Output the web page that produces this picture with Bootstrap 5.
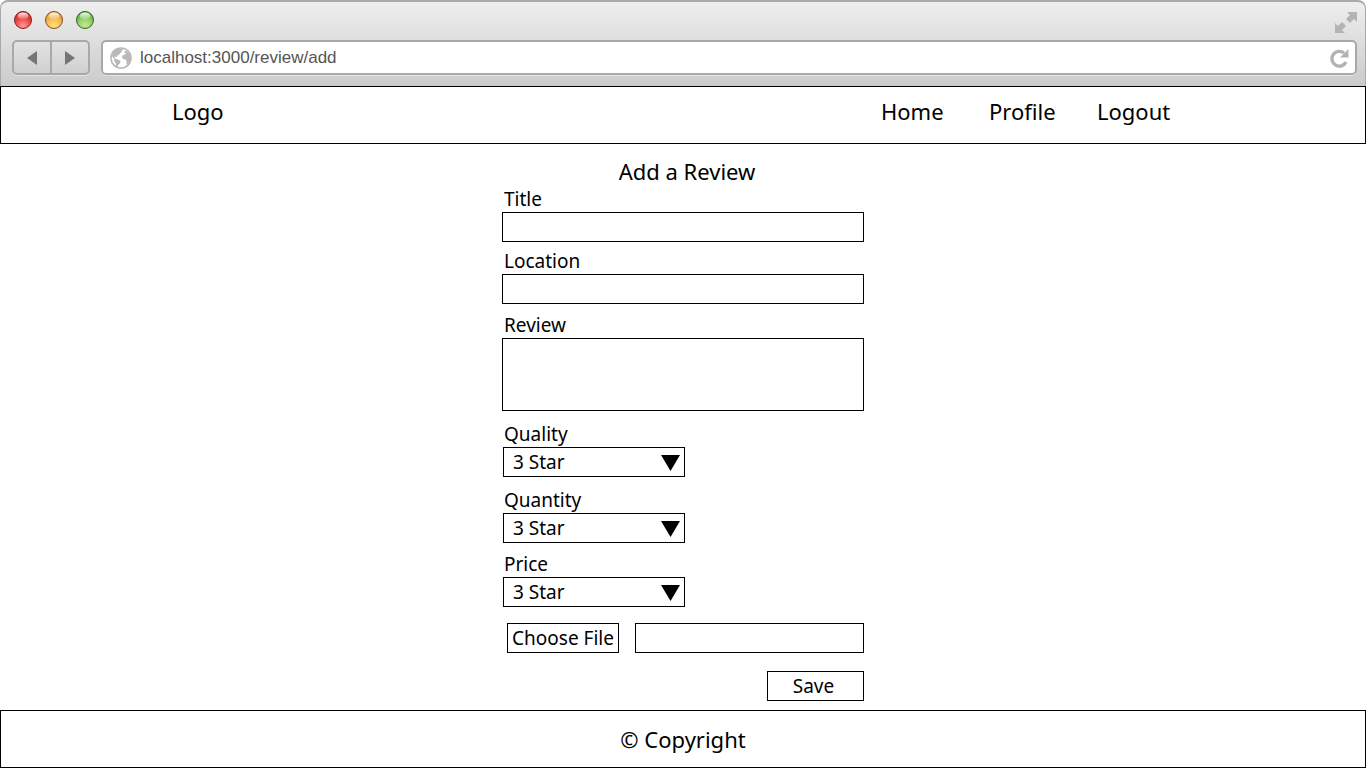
<!DOCTYPE html>
<html lang="en">
<head>
<meta charset="utf-8">
<meta name="viewport" content="width=device-width, initial-scale=1">
<title>Add a Review</title>
<link href="https://cdn.jsdelivr.net/npm/bootstrap@5.3.0/dist/css/bootstrap.min.css" rel="stylesheet">
<style>
  body { font-family: "Noto Sans", sans-serif; font-size: 19px; line-height: 26px; color: #000; background: #fff; }

  /* browser window bar */
  .window-bar { height: 86px; padding: 9px 8px 0 11px; border: 1px solid #a9a9a9; border-top-width: 2px; border-bottom: 0; border-radius: 8px 8px 0 0; background: linear-gradient(#eee, #cbcbcb); font-family: "Liberation Sans", sans-serif; }
  .window-top { height: 29px; }
  .window-bar button { padding: 0; border: 0; background: none; line-height: 0; }
  .lights { gap: 11px; padding-left: 1px; }
  .history { width: 78px; height: 35px; border: 2px solid #a9a9a9; border-radius: 5px; background: linear-gradient(#e2e2e2, #d0d0d0); box-shadow: 0 1px 0 #e4e4e4; }
  .history button + button { border-left: 2px solid #a9a9a9; }
  .address { height: 35px; margin-left: 11px; padding: 0 5px 0 7px; border: 2px solid #a9a9a9; border-radius: 5px; background: #fff; box-shadow: 0 1px 0 #e4e4e4; }
  .address input { min-width: 0; padding: 0; border: 0; outline: 0; font-size: 17px; line-height: 20px; color: #555; background: none; }

  /* page */
  .site-nav, .site-footer { height: 58px; border: 1px solid #000; font-size: 22px; line-height: 30px; }
  .site-nav a { color: #000; text-decoration: none; }
  .site-nav .inner { max-width: 1022px; padding-bottom: 8px; }
  .menu { display: grid; grid-template-columns: 108px 108px 97px; }
  .review-form { width: 100%; max-width: 362px; padding-top: 12px; }
  .review-form h1 { margin-bottom: 0; padding-left: 8px; font-size: 22px; line-height: 30px; font-weight: 400; }
  .review-form label { display: block; margin: 0 2px; }
  .review-form .form-control, .review-form .form-select, .review-form .btn { height: 30px; padding: 0 9px; border: 1px solid #000; border-radius: 0; font-size: 19px; line-height: 26px; color: #000; background-color: #fff; }
  .review-form textarea.form-control { height: 73px; resize: none; }
  .review-form .form-select { width: 182px; margin-left: 1px; background: #fff url("data:image/svg+xml,%3Csvg xmlns='http://www.w3.org/2000/svg' viewBox='0 0 19 16'%3E%3Cpath d='M0 0h19L9.500 16z'/%3E%3C/svg%3E") no-repeat right 4px top 7px / 19px 16px; }
  .gap-s { margin-bottom: 6px; }
  .gap-m { margin-bottom: 8px; }
  .gap-l { margin-bottom: 10px; }
  .file-row { gap: 16px; margin: 16px 0 18px 5px; }
  .review-form .choose { width: 112px; padding: 0; }
  .review-form .save { width: 97px; padding: 0 4px 0 0; }
</style>
</head>
<body class="d-flex flex-column min-vh-100">

<div class="window-bar flex-shrink-0">
  <div class="window-top d-flex justify-content-between align-items-start">
    <div class="lights d-flex align-items-start">
      <svg width="0" height="0" class="position-absolute" aria-hidden="true">
        <defs>
          <radialGradient id="red" cx=".5" cy=".85" r=".8"><stop offset="0" stop-color="#ff9c9c"/><stop offset=".5" stop-color="#f0504c"/><stop offset="1" stop-color="#d01f1c"/></radialGradient>
          <radialGradient id="amber" cx=".5" cy=".85" r=".8"><stop offset="0" stop-color="#ffe27a"/><stop offset=".5" stop-color="#f5c057"/><stop offset="1" stop-color="#e0922e"/></radialGradient>
          <radialGradient id="green" cx=".5" cy=".85" r=".8"><stop offset="0" stop-color="#c3ea8c"/><stop offset=".5" stop-color="#98d470"/><stop offset="1" stop-color="#4fa333"/></radialGradient>
          <linearGradient id="shine" x2="0" y2="1"><stop offset="0" stop-color="#fff" stop-opacity=".95"/><stop offset="1" stop-color="#fff" stop-opacity=".1"/></linearGradient>
        </defs>
      </svg>
      <button type="button" aria-label="Close"><svg width="20" height="20"><circle cx="10" cy="9" r="8.500" fill="url(#red)" stroke="#862220" stroke-width="1"/><ellipse cx="10" cy="5" rx="5.500" ry="3.500" fill="url(#shine)"/></svg></button>
      <button type="button" aria-label="Minimize"><svg width="20" height="20"><circle cx="10" cy="9" r="8.500" fill="url(#amber)" stroke="#865222" stroke-width="1"/><ellipse cx="10" cy="5" rx="5.500" ry="3.500" fill="url(#shine)"/></svg></button>
      <button type="button" aria-label="Zoom"><svg width="20" height="20"><circle cx="10" cy="9" r="8.500" fill="url(#green)" stroke="#33661f" stroke-width="1"/><ellipse cx="10" cy="5" rx="5.500" ry="3.500" fill="url(#shine)"/></svg></button>
    </div>
    <button type="button" aria-label="Full screen"><svg width="22" height="23" viewBox="0 0 22 23" fill="#b3b3b3"><path d="M12 1h10v10l-3-3-4 4-1-1-3-3 4-4zM0 12l3 3 4-4 4 4-4 4 3 3H0z"/></svg></button>
  </div>
  <div class="d-flex">
    <div class="history d-flex flex-shrink-0">
      <button type="button" class="flex-fill" aria-label="Back"><svg width="12" height="14"><path d="M11 0v14L1 7z" fill="#757575"/></svg></button>
      <button type="button" class="flex-fill" aria-label="Forward"><svg width="12" height="14"><path d="M1 0v14l10-7z" fill="#757575"/></svg></button>
    </div>
    <div class="address d-flex align-items-center flex-grow-1">
      <svg class="me-2 flex-shrink-0" width="22" height="22" viewBox="0 0 22 22" aria-hidden="true"><circle cx="11" cy="11" r="10" fill="#fff" stroke="#b9b9b9" stroke-width="1.600"/><path fill="#b9b9b9" d="M2 8l2-4 4-2.500h4l1.500 1-2 1 .500 1.500-2 1-.500 1.500-2 1-.500 1.500-2-.500-.500 1.500 1.500 1 2 .500 2.500 1.500-.500 2.500-1.500 1-1 3-1.500-1v-3L4 14l.500-2L2.500 10zM14.500 4l2 0 3 3 1.500 4-1 4-2.500 3-1-1v-3l-1-1.500-2.500-.500-1-2 1-2 2-.500 1-1-1.500-1z"/></svg>
      <input type="text" class="flex-grow-1" aria-label="Address" value="localhost:3000/review/add">
      <button type="button" aria-label="Reload"><svg width="20" height="20" viewBox="0 0 20 20"><path d="M16 14A7.400 7.400 0 1 1 14 5" fill="none" stroke="#b3b3b3" stroke-width="3.400"/><path d="M18.500 1v8.500H10z" fill="#b3b3b3"/></svg></button>
    </div>
  </div>
</div>

<header class="site-nav d-flex flex-shrink-0">
  <nav class="inner container-fluid px-0 d-flex justify-content-between align-items-center">
    <a href="#">Logo</a>
    <div class="menu">
      <a href="#">Home</a>
      <a href="#">Profile</a>
      <a href="#">Logout</a>
    </div>
  </nav>
</header>

<main class="flex-grow-1">
  <form class="review-form mx-auto">
    <h1 class="text-center">Add a Review</h1>
    <div class="gap-s">
      <label for="title">Title</label>
      <input type="text" class="form-control" id="title">
    </div>
    <div class="gap-m">
      <label for="location">Location</label>
      <input type="text" class="form-control" id="location">
    </div>
    <div class="gap-l">
      <label for="review">Review</label>
      <textarea class="form-control d-block" id="review"></textarea>
    </div>
    <div class="gap-l">
      <label for="quality">Quality</label>
      <select class="form-select" id="quality"><option>3 Star</option></select>
    </div>
    <div class="gap-m">
      <label for="quantity">Quantity</label>
      <select class="form-select" id="quantity"><option>3 Star</option></select>
    </div>
    <div>
      <label for="price">Price</label>
      <select class="form-select" id="price"><option>3 Star</option></select>
    </div>
    <div class="file-row d-flex">
      <button type="button" class="btn choose flex-shrink-0">Choose File</button>
      <input type="text" class="form-control" aria-label="Chosen file" readonly>
    </div>
    <div class="d-flex justify-content-end">
      <button type="submit" class="btn save">Save</button>
    </div>
  </form>
</main>

<footer class="site-footer d-flex flex-shrink-0 align-items-center justify-content-center">© Copyright</footer>

<script src="https://cdn.jsdelivr.net/npm/bootstrap@5.3.0/dist/js/bootstrap.bundle.min.js"></script>
</body>
</html>
